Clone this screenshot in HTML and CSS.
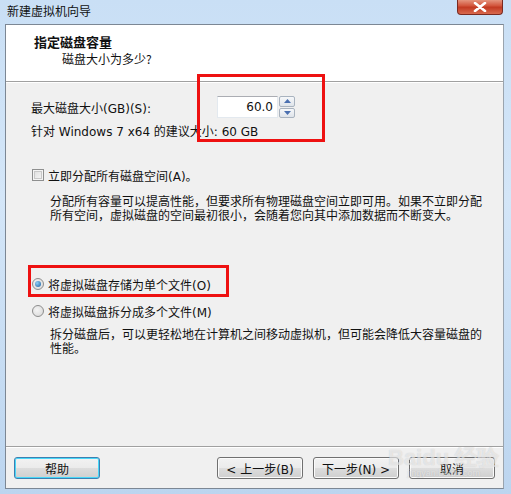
FILE: index.html
```html
<!DOCTYPE html>
<html>
<head>
<meta charset="utf-8">
<link rel="stylesheet" href="styles.css">
</head>
<body>
<div class="window">
  <div class="titlebar">
    <span class="title">新建虚拟机向导</span>
    <div class="close"><svg width="14" height="10" viewBox="0 0 14 10"><path d="M2 1 L12 9 M12 1 L2 9" stroke="#fff" stroke-width="2.6" stroke-linecap="round"/><path d="M2 1 L12 9 M12 1 L2 9" stroke="#fff" stroke-width="1.6"/></svg></div>
  </div>
  <div class="frame">
    <div class="header">
      <div class="h-title">指定磁盘容量</div>
      <div class="h-sub">磁盘大小为多少?</div>
    </div>
    <div class="content">
      <div class="size-row">
        <span class="lbl">最大磁盘大小(GB)(S):</span>
        <div class="spin">
          <div class="spin-input">60.0</div>
          <div class="spin-btns">
            <div class="sb"><svg width="7" height="4" viewBox="0 0 7 4"><path d="M0 4 L3.5 0 L7 4Z" fill="#4a6fb0"/></svg></div>
            <div class="sb"><svg width="7" height="4" viewBox="0 0 7 4"><path d="M0 0 L3.5 4 L7 0Z" fill="#4a6fb0"/></svg></div>
          </div>
        </div>
      </div>
      <div class="hint">针对 Windows 7 x64 的建议大小: 60 GB</div>
      <div class="check-row"><span class="checkbox"></span><span>立即分配所有磁盘空间(A)。</span></div>
      <div class="desc d1">分配所有容量可以提高性能，但要求所有物理磁盘空间立即可用。如果不立即分配<br>所有空间，虚拟磁盘的空间最初很小，会随着您向其中添加数据而不断变大。</div>
      <div class="radio-row r1"><span class="radio checked"><span class="dot"></span></span><span>将虚拟磁盘存储为单个文件(O)</span></div>
      <div class="radio-row r2"><span class="radio"></span><span>将虚拟磁盘拆分成多个文件(M)</span></div>
      <div class="desc d2">拆分磁盘后，可以更轻松地在计算机之间移动虚拟机，但可能会降低大容量磁盘的<br>性能。</div>
    </div>
    <div class="footer">
      <button class="btn help">帮助</button>
      <div class="spacer"></div>
      <button class="btn">&lt; 上一步(B)</button>
      <button class="btn">下一步(N) &gt;</button>
      <button class="btn">取消</button>
    </div>
  </div>
  <div class="redbox box1"></div>
  <div class="redbox box2"></div>
  <div class="watermark"><span class="wm-big">Baidu 经验</span><span class="wm-small">jingyan.baidu.com</span></div>
</div>
</body>
</html>
```
FILE: styles.css
```css
* { box-sizing: border-box; }
html, body { margin: 0; padding: 0; }
body {
  width: 511px; height: 494px; overflow: hidden;
  font-family: "DejaVu Sans", "Noto Sans CJK SC", sans-serif;
  font-size: 12px; color: #111;
}
.window {
  position: relative;
  width: 511px; height: 494px;
  background: linear-gradient(180deg, #c9dff5 0%, #d4e6f8 40%, #bcd5ef 100%);
  padding: 0 8px 0 5px;
  display: flex; flex-direction: column;
}
.titlebar {
  height: 24px; display: flex; align-items: flex-start;
  position: relative;
}
.title {
  font-family: "Noto Sans CJK SC", sans-serif;
  font-size: 12px; margin-top: 3px; margin-left: 2px; color: #111;
  line-height: 16px;
}
.close {
  position: absolute; right: 0; top: -1px;
  width: 46px; height: 16px;
  border: 1px solid #7a2a20; border-top: none;
  border-radius: 0 0 4px 4px;
  background: linear-gradient(180deg, #e8a08a 0%, #d2553c 45%, #c23a22 55%, #d86a4e 100%);
  display: flex; align-items: center; justify-content: center;
}
.frame {
  width: 499px; height: 465px;
  border: 1px solid #7c8794;
  border-right-color: #9aa4ae;
  background: #f0f0f0;
  display: flex; flex-direction: column;
}
.header {
  height: 57px; background: #fff;
  border-bottom: 1px solid #a0a0a0;
  box-shadow: 0 1px 0 #fff;
  padding: 9px 0 0 28px;
  font-family: "Noto Sans CJK SC", sans-serif;
}
.h-title { font-weight: bold; font-size: 13px; line-height: 16px; }
.h-sub { margin-left: 28px; line-height: 16px; font-size: 12px; margin-top: 1px; }
.content {
  flex: 1; position: relative;
  padding: 14px 0 0 25px;
}
.size-row { display: flex; align-items: center; height: 22px; }
.lbl { width: 186px; }
.spin { display: flex; height: 22px; }
.spin-input {
  width: 61px; height: 22px; background: #fff;
  border: 1px solid #e3e9ef; border-top-color: #abadb3;
  text-align: right; padding: 3px 4px 0 0; line-height: 15px; font-size: 12px;
}
.spin-btns { display: flex; flex-direction: column; gap: 1px; margin-left: 1px; }
.sb {
  width: 16px; height: 10.5px;
  border: 1px solid #a9b3bf; border-radius: 2px;
  background: linear-gradient(180deg, #f6f8fa, #dfe4ea);
  display: flex; align-items: center; justify-content: center;
}
.hint { margin-top: 7px; line-height: 14px; }
.check-row { display: flex; align-items: center; margin-top: 29px; height: 14px; }
.checkbox {
  width: 12px; height: 12px; margin: 0 4px 0 1px;
  border: 1px solid #8e8f8f;
  background: linear-gradient(135deg, #dcdcdc, #f8f8f8);
  box-shadow: inset 0 0 0 1px #f4f4f4, inset 0 0 0 2px #c8c8c8;
}
.desc { padding-left: 19px; line-height: 14px; font-family: "Noto Sans CJK SC", sans-serif; }
.d1 { margin-top: 12px; }
.radio-row { display: flex; align-items: center; height: 14px; }
.r1 { margin-top: 55px; }
.r2 { margin-top: 13px; }
.radio {
  width: 12px; height: 12px; border-radius: 50%; margin: 0 4px 0 1px;
  border: 1px solid #8d8d8d;
  background: radial-gradient(circle at 40% 40%, #f4f4f4, #d6d6d6);
  display: flex; align-items: center; justify-content: center;
}
.dot {
  width: 6px; height: 6px; border-radius: 50%;
  background: radial-gradient(circle at 35% 35%, #8fd0f5, #1c5fa3);
}
.d2 { margin-top: 9px; }
.footer {
  height: 42px; border-top: 1px solid #a0a0a0;
  box-shadow: inset 0 1px 0 #fff;
  display: flex; align-items: flex-start;
  padding: 10px 8px 0 8px; gap: 10px;
}
.spacer { flex: 1; }
.btn {
  width: 86px; height: 22px; margin: 0;
  font-family: "DejaVu Sans", "Noto Sans CJK SC", sans-serif; font-size: 12px; color: #111;
  border: 1px solid #707070; border-radius: 3px;
  background: linear-gradient(180deg, #f2f2f2 0%, #ebebeb 50%, #dddddd 51%, #cfcfcf 100%);
  box-shadow: inset 0 0 0 1px #fbfbfb;
  padding: 0;
}
.btn.help { border-color: #3c7fb1; box-shadow: inset 0 0 0 1px #48d7f8; }
.redbox { position: absolute; border: 3px solid #ee1111; }
.box1 { left: 197px; top: 74px; width: 128px; height: 68px; }
.box2 { left: 28px; top: 265px; width: 201px; height: 32px; }
.watermark {
  position: absolute; left: 388px; top: 446px;
  display: flex; flex-direction: column; align-items: center;
  color: rgba(255,255,255,0.55);
  text-shadow: 0 0 1px rgba(120,120,120,0.35);
  pointer-events: none;
}
.wm-big { font-family: "Liberation Sans", sans-serif; font-weight: bold; font-size: 22px; line-height: 24px; }
.wm-small { font-family: "Liberation Sans", sans-serif; font-size: 9px; margin-top: -2px; }
```
